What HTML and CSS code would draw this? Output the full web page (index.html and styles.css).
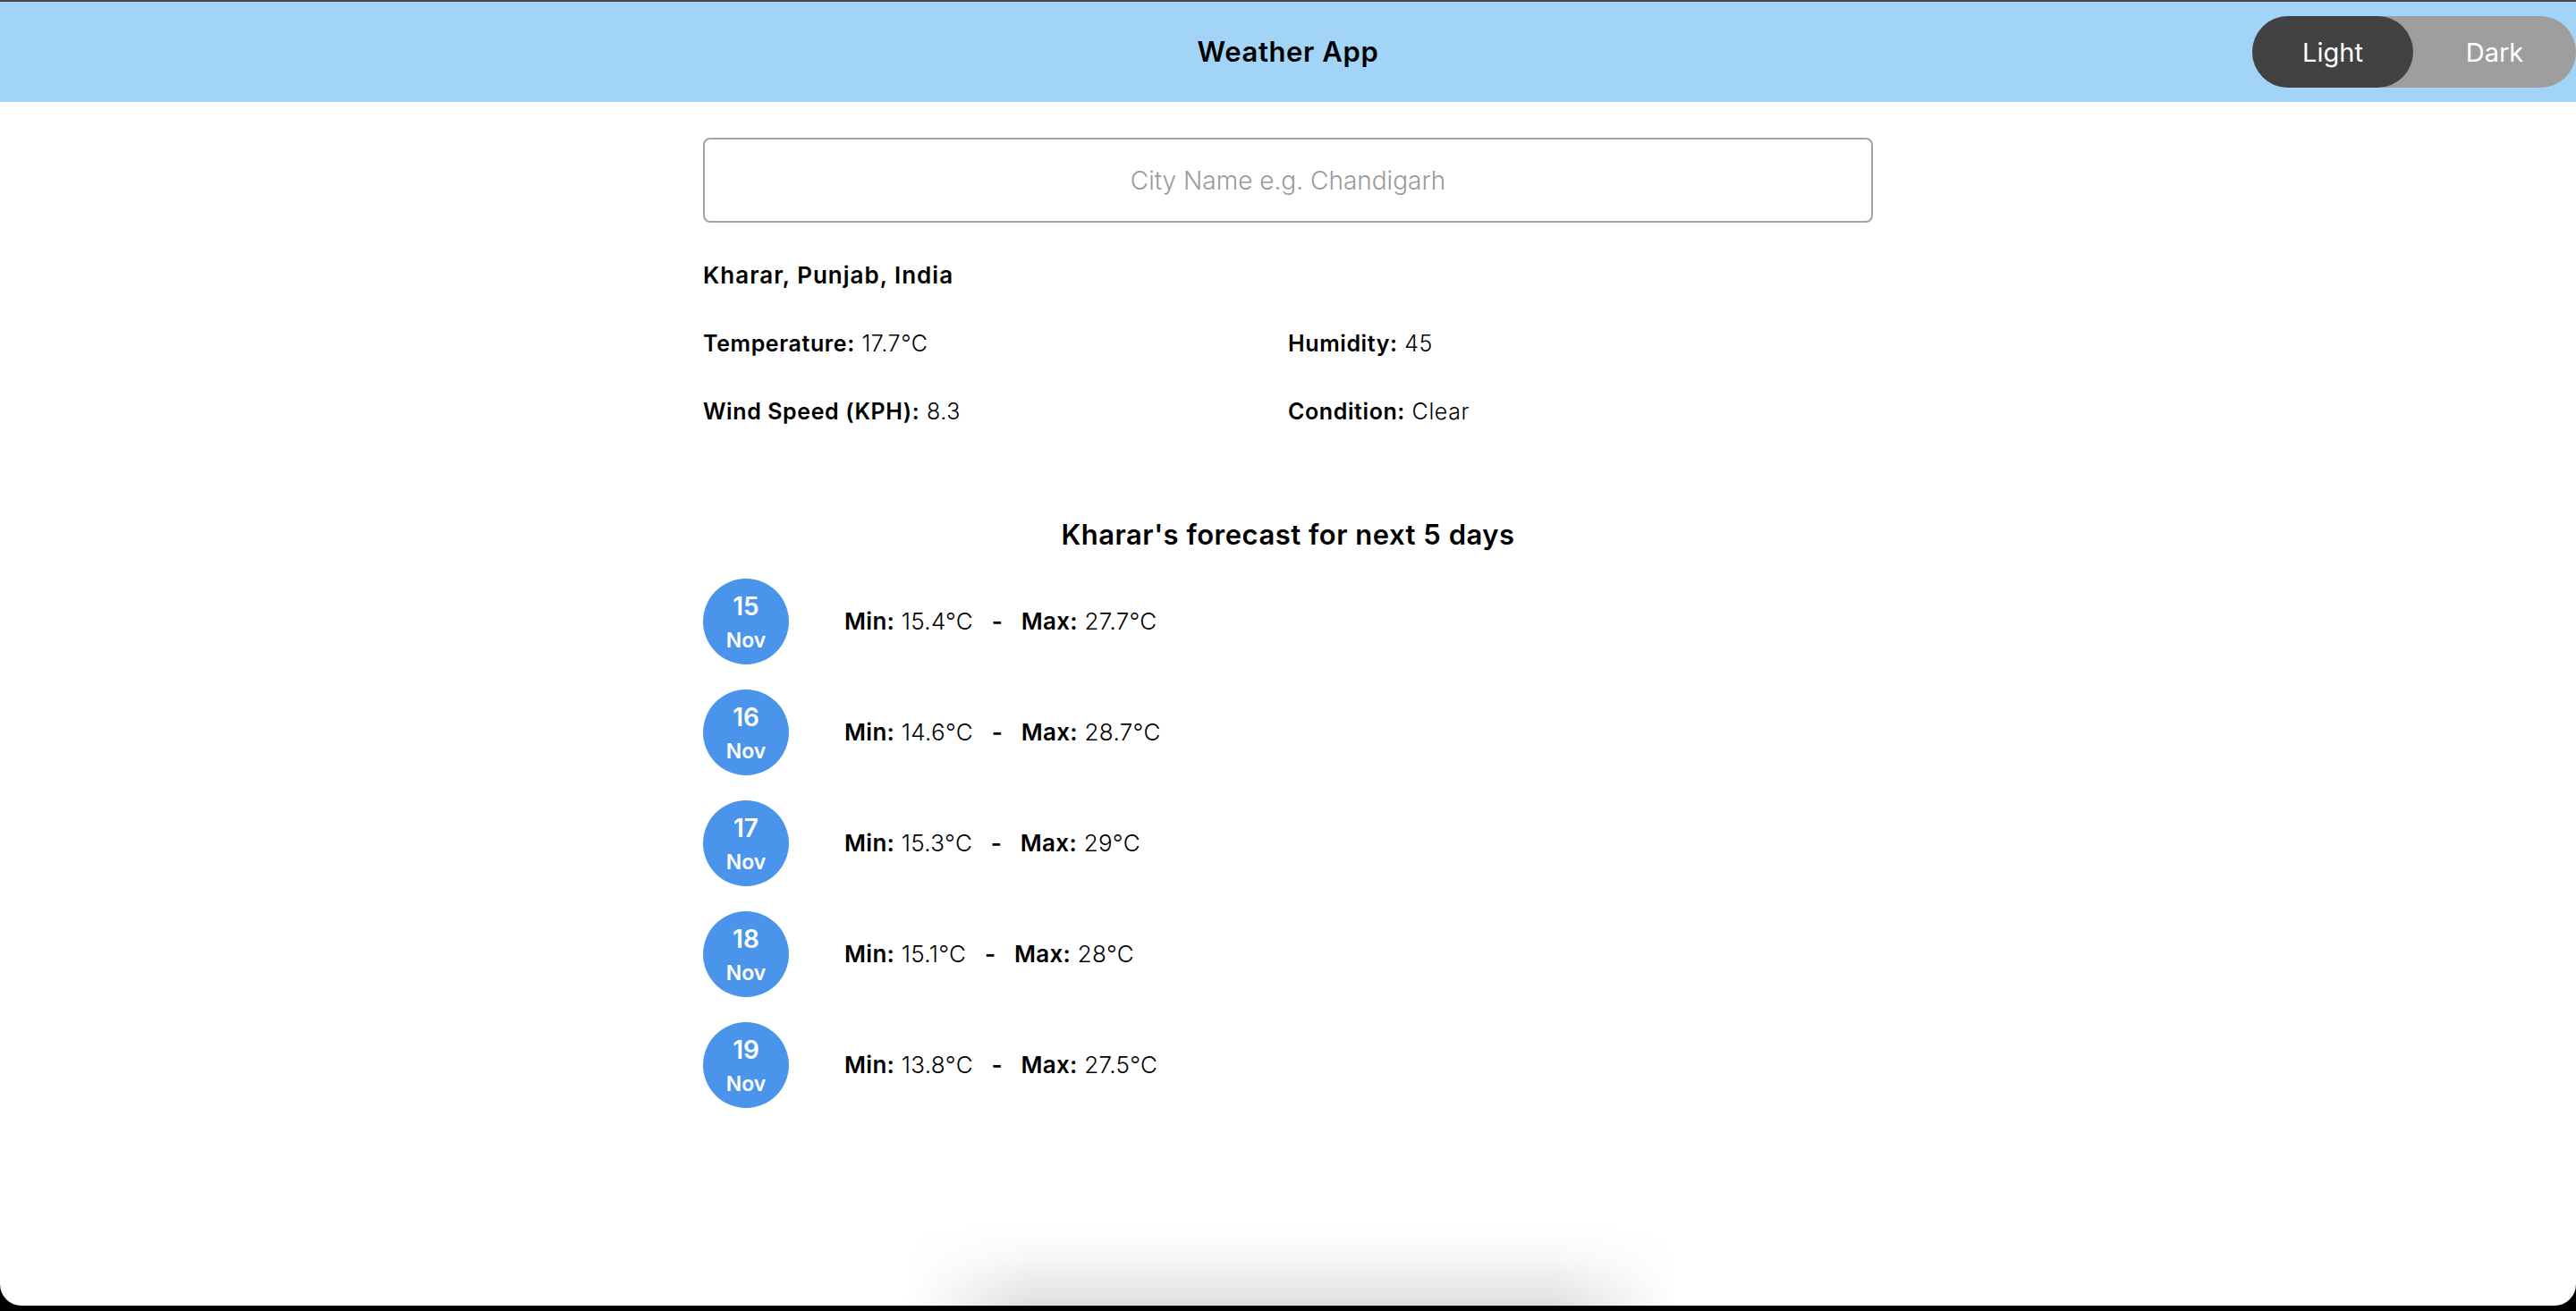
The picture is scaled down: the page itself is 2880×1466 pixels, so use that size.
FILE: index.html
```html
<!DOCTYPE html>
<html lang="en">
<head>
<meta charset="utf-8">
<title>Weather App</title>
<link rel="stylesheet" href="styles.css">
</head>
<body>
<div class="window">
  <header class="topbar">
    <div class="spacer"></div>
    <h1 class="title">Weather App</h1>
    <div class="toggle">
      <span class="opt opt-active">Light</span>
      <span class="opt">Dark</span>
    </div>
  </header>

  <main class="container">
    <input class="search" type="text" placeholder="City Name e.g. Chandigarh">

    <h2 class="location">Kharar, Punjab, India</h2>

    <div class="info-grid">
      <p class="info"><b>Temperature:</b> 17.7°C</p>
      <p class="info"><b>Humidity:</b> 45</p>
      <p class="info"><b>Wind Speed (KPH):</b> 8.3</p>
      <p class="info"><b>Condition:</b> Clear</p>
    </div>

    <h3 class="forecast-title">Kharar's forecast for next 5 days</h3>

    <ul class="forecast">
      <li class="day-row">
        <div class="date"><span class="date-num">15</span><span class="date-mon">Nov</span></div>
        <p class="range"><b>Min:</b> 15.4°C <span class="sep">-</span> <b>Max:</b> 27.7°C</p>
      </li>
      <li class="day-row">
        <div class="date"><span class="date-num">16</span><span class="date-mon">Nov</span></div>
        <p class="range"><b>Min:</b> 14.6°C <span class="sep">-</span> <b>Max:</b> 28.7°C</p>
      </li>
      <li class="day-row">
        <div class="date"><span class="date-num">17</span><span class="date-mon">Nov</span></div>
        <p class="range"><b>Min:</b> 15.3°C <span class="sep">-</span> <b>Max:</b> 29°C</p>
      </li>
      <li class="day-row">
        <div class="date"><span class="date-num">18</span><span class="date-mon">Nov</span></div>
        <p class="range"><b>Min:</b> 15.1°C <span class="sep">-</span> <b>Max:</b> 28°C</p>
      </li>
      <li class="day-row">
        <div class="date"><span class="date-num">19</span><span class="date-mon">Nov</span></div>
        <p class="range"><b>Min:</b> 13.8°C <span class="sep">-</span> <b>Max:</b> 27.5°C</p>
      </li>
    </ul>
  </main>

  <div class="dock-shadow"></div>
</div>
</body>
</html>
```

FILE: styles.css
```css
* {
  box-sizing: border-box;
}

html, body {
  margin: 0;
  padding: 0;
  background: #000;
}

body {
  font-family: "Inter", "Lato", "Noto Sans", sans-serif;
  color: #000;
}

b {
  font-weight: 600;
}

.window {
  position: relative;
  height: 1460px;
  background: #fff;
  border-top: 2px solid #464646;
  border-radius: 0 0 24px 24px;
  overflow: hidden;
}

.topbar {
  height: 112px;
  background: #a2d4f7;
  display: grid;
  grid-template-columns: 1fr auto 1fr;
  align-items: center;
}

.title {
  margin: 0;
  font-size: 31px;
  font-weight: 600;
  line-height: 40px;
  letter-spacing: 0.6px;
}

.toggle {
  justify-self: end;
  display: flex;
  height: 80px;
  width: 362px;
  background: #9e9e9e;
  border-radius: 40px;
}

.opt {
  width: 182px;
  display: flex;
  align-items: center;
  justify-content: center;
  color: #fff;
  font-size: 29px;
  font-weight: 400;
}

.opt-active {
  width: 180px;
  background: #424242;
  border-radius: 40px;
}

.container {
  width: 1308px;
  margin: 40px auto 0;
}

.search {
  display: block;
  width: 100%;
  height: 95px;
  border: 2px solid #a2a2a2;
  border-radius: 8px;
  font-family: inherit;
  font-size: 28px;
  font-weight: 300;
  text-align: center;
  color: #333;
  outline: none;
}

.search::placeholder {
  color: #9a9a9a;
}

.location {
  margin: 43px 0 0;
  font-size: 26px;
  font-weight: 600;
  line-height: 32px;
  letter-spacing: 1px;
}

.info-grid {
  margin-top: 44px;
  display: grid;
  grid-template-columns: 1fr 1fr;
  row-gap: 44px;
}

.info {
  margin: 0;
  font-size: 25px;
  font-weight: 300;
  line-height: 32px;
  letter-spacing: 0.6px;
}

.forecast-title {
  margin: 104px 0 0;
  text-align: center;
  font-size: 31px;
  font-weight: 600;
  line-height: 36px;
  letter-spacing: 0.5px;
}

.forecast {
  list-style: none;
  margin: 31px 0 0;
  padding: 0;
  display: flex;
  flex-direction: column;
  gap: 28px;
}

.day-row {
  display: flex;
  align-items: center;
  gap: 62px;
}

.date {
  width: 96px;
  height: 96px;
  border-radius: 50%;
  background: #4a95eb;
  color: #fff;
  display: flex;
  flex-direction: column;
  align-items: center;
  padding-top: 16px;
  gap: 8px;
  font-weight: 600;
}

.date-num {
  font-size: 28px;
  line-height: 30px;
}

.date-mon {
  font-size: 23px;
  line-height: 30px;
}

.range {
  margin: 0;
  font-size: 26px;
  font-weight: 300;
  line-height: 32px;
  letter-spacing: 0.3px;
}

.sep {
  font-weight: 600;
  margin: 0 13px;
}

.dock-shadow {
  position: absolute;
  left: 1012px;
  width: 863px;
  bottom: 0;
  height: 90px;
  background: linear-gradient(to bottom, rgba(0,0,0,0) 0%, rgba(0,0,0,0.03) 40%, rgba(0,0,0,0.12) 100%);
  -webkit-mask-image: linear-gradient(to right, transparent 0%, #000 16%, #000 84%, transparent 100%);
  mask-image: linear-gradient(to right, transparent 0%, #000 16%, #000 84%, transparent 100%);
}
```
